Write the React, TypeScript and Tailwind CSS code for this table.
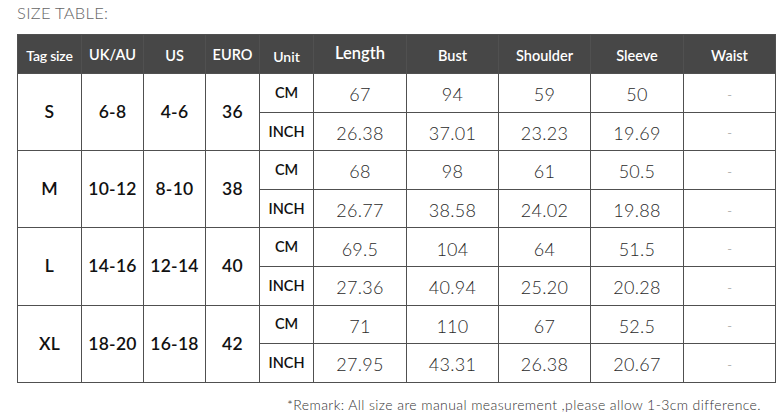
import React from "react";

interface SizeRow {
  tag: string;
  uk: string;
  us: string;
  euro: string;
  cm: string[];
  inch: string[];
}

const rows: SizeRow[] = [
  { tag: "S", uk: "6-8", us: "4-6", euro: "36", cm: ["67", "94", "59", "50"], inch: ["26.38", "37.01", "23.23", "19.69"] },
  { tag: "M", uk: "10-12", us: "8-10", euro: "38", cm: ["68", "98", "61", "50.5"], inch: ["26.77", "38.58", "24.02", "19.88"] },
  { tag: "L", uk: "14-16", us: "12-14", euro: "40", cm: ["69.5", "104", "64", "51.5"], inch: ["27.36", "40.94", "25.20", "20.28"] },
  { tag: "XL", uk: "18-20", us: "16-18", euro: "42", cm: ["71", "110", "67", "52.5"], inch: ["27.95", "43.31", "26.38", "20.67"] },
];

const headers = ["Tag size", "UK/AU", "US", "EURO", "Unit", "Length", "Bust", "Shoulder", "Sleeve", "Waist"];
const widths = ["w-[64px]", "w-[62px]", "w-[62px]", "w-[54px]", "w-[54px]", "w-[93px]", "w-[92px]", "w-[92px]", "w-[93px]", "w-[92px]"];

// per-header text tweaks, the source image isn't uniform
const headSize = [
  "text-[14px] tracking-[-0.2px] pt-[2px]",
  "text-[14.5px] pt-[2px]",
  "text-[14.5px] pt-[3px]",
  "text-[14.5px] pt-[2px]",
  "text-[14px] pt-[4px]",
  "text-[16.5px] pb-[2px]",
  "text-[14.5px] pt-[4px]",
  "text-[14.5px] pt-[4px]",
  "text-[14.5px] pt-[4px]",
  "text-[14.5px] pt-[3px]",
];

const cell = "border border-[#505050] text-center p-0";
const bold = "font-['Lato',sans-serif] font-semibold text-[17.5px] text-[#111] tracking-[0.3px]";
const unit = "font-['Lato',sans-serif] font-semibold text-[14.5px] text-[#111]";
const num = "font-['Lato',sans-serif] font-light text-[18px] text-[#2a2a2a] pt-[4px] tracking-[0.3px]";
const dash = "font-['Lato',sans-serif] font-light text-[14px] text-[#888] pt-[3px]";

export default function App() {
  return (
    <div className="w-[784px] h-[418px] bg-white relative overflow-hidden">
      <div className="pl-[17px] pt-[1px] h-[34px] font-['Lato',sans-serif] font-light text-[16.5px] text-[#666] tracking-[0.3px]">
        SIZE TABLE:
      </div>
      <table className="ml-[17px] border-collapse table-fixed w-[758px]">
        <colgroup>
          {widths.map((w, i) => (
            <col key={i} className={w} />
          ))}
        </colgroup>
        <thead>
          <tr className="h-[39px] bg-[#474747]">
            {headers.map((h, i) => (
              <th key={h} className={`${cell} font-['Lato',sans-serif] font-semibold text-white ${headSize[i]}`}>
                {h}
              </th>
            ))}
          </tr>
        </thead>
        <tbody>
          {rows.map((r) => (
            <React.Fragment key={r.tag}>
              <tr className="h-[38.6px]">
                <td rowSpan={2} className={`${cell} ${bold}`}>{r.tag}</td>
                <td rowSpan={2} className={`${cell} ${bold}`}>{r.uk}</td>
                <td rowSpan={2} className={`${cell} ${bold}`}>{r.us}</td>
                <td rowSpan={2} className={`${cell} ${bold}`}>{r.euro}</td>
                <td className={`${cell} ${unit}`}>CM</td>
                {r.cm.map((v, i) => (
                  <td key={i} className={`${cell} ${num}`}>{v}</td>
                ))}
                <td className={`${cell} ${dash}`}>-</td>
              </tr>
              <tr className="h-[38.6px]">
                <td className={`${cell} ${unit}`}>INCH</td>
                {r.inch.map((v, i) => (
                  <td key={i} className={`${cell} ${num}`}>{v}</td>
                ))}
                <td className={`${cell} ${dash}`}>-</td>
              </tr>
            </React.Fragment>
          ))}
        </tbody>
      </table>
      <div className="pr-[23px] pt-[11px] text-right font-['Lato',sans-serif] font-light text-[14px] text-[#333] tracking-[0.4px]">
        *Remark: All size are manual measurement ,please allow 1-3cm difference.
      </div>
    </div>
  );
}
